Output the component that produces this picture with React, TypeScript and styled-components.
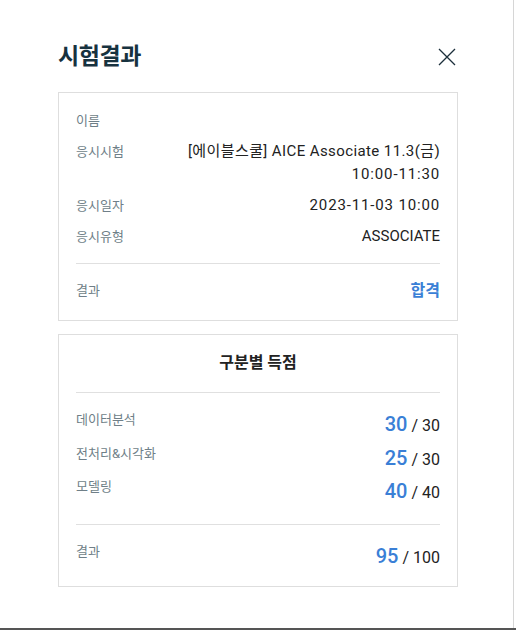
import styled, { createGlobalStyle } from 'styled-components'

const GlobalStyle = createGlobalStyle`
    body {
        margin: 0;
        font-family: Roboto, "Noto Sans CJK KR", sans-serif;
        color: #222;
    }
`

const Screen = styled.div`
    width: 516px;
    height: 630px;
    display: flex;
    flex-direction: column;
    background: #fff;
`
const Modal = styled.div`
    width: 514px;
    height: 628px;
    box-sizing: border-box;
    padding: 42px 55px 0 58px;
    background: #fff;
    border-right: 1px solid #d6d6d6;
`
const Backdrop = styled.div`
    flex: 1;
    background: #555;
`
const Header = styled.div`
    display: flex;
    justify-content: space-between;
    align-items: center;
    height: 30px;
    margin-bottom: 20px;
`
const Title = styled.h2`
    margin: 0;
    font-size: 23px;
    font-weight: 700;
    letter-spacing: -0.4px;
    color: #17323f;
    line-height: 30px;
`
const CloseButton = styled.button`
    width: 18px;
    height: 18px;
    padding: 0;
    margin-right: 2px;
    border: 0;
    background: none;
    cursor: pointer;
    display: flex;
`
const Card = styled.section<{ $gap?: number; $bottom: number }>`
    border: 1px solid #dedede;
    margin-top: ${p => p.$gap || 0}px;
    padding: 16px 17px ${p => p.$bottom}px 17px;
`
const InfoList = styled.div`
    display: flex;
    flex-direction: column;
    gap: 8px;
`
const Row = styled.div`
    display: flex;
    justify-content: space-between;
    align-items: flex-start;
    line-height: 23px;
`
const Label = styled.span`
    font-size: 13px;
    color: #6f7f88;
    white-space: nowrap;
`
const Value = styled.span<{ $accent?: boolean; $spacing?: number }>`
    font-size: ${p => (p.$accent ? 16 : 15)}px;
    text-align: right;
    letter-spacing: ${p => p.$spacing || 0}px;
    color: ${p => (p.$accent ? '#3a7fd6' : '#222')};
    font-weight: ${p => (p.$accent ? 700 : 400)};
`
const Divider = styled.hr<{ $top: number; $bottom: number }>`
    border: 0;
    border-top: 1px solid #e0e0e0;
    margin: ${p => p.$top}px 0 ${p => p.$bottom}px;
`
const CardTitle = styled.h3`
    margin: 0;
    text-align: center;
    font-size: 16px;
    font-weight: 700;
    line-height: 23px;
    color: #222;
`
const ScoreList = styled.div`
    display: flex;
    flex-direction: column;
    gap: 1.5px;
`
const Score = styled.span`
    display: flex;
    align-items: baseline;
    height: 32px;
    line-height: 32px;
    white-space: nowrap;
`
const Got = styled.span`
    font-size: 20px;
    font-weight: 500;
    color: #3a7fd6;
`
const Total = styled.span`
    font-size: 16px;
    color: #222;
    white-space: pre;
`

const CloseIcon = () => (
    <svg width="18" height="18" viewBox="0 0 18 18">
        <path d="M1 1L17 17M17 1L1 17" stroke="#1c2f3b" strokeWidth="1.3" fill="none" />
    </svg>
)

const scores = [
    { name: '데이터분석', got: 30, max: 30 },
    { name: '전처리&시각화', got: 25, max: 30 },
    { name: '모델링', got: 40, max: 40 },
]

const ScoreValue = ({ got, max }: { got: number; max: number }) => (
    <Score>
        <Got>{got}</Got>
        <Total> / {max}</Total>
    </Score>
)

export default function App() {
    return (
        <Screen>
            <GlobalStyle />
            <Modal>
                <Header>
                    <Title>시험결과</Title>
                    <CloseButton aria-label="닫기">
                        <CloseIcon />
                    </CloseButton>
                </Header>

                <Card $bottom={18}>
                    <InfoList>
                        <Row>
                            <Label>이름</Label>
                            <Value></Value>
                        </Row>
                        <Row>
                            <Label>응시시험</Label>
                            <Value $spacing={0.4}>
                                [에이블스쿨] AICE Associate 11.3(금)
                                <br />
                                <Value $spacing={0.85}>10:00-11:30</Value>
                            </Value>
                        </Row>
                        <Row>
                            <Label>응시일자</Label>
                            <Value $spacing={0.85}>2023-11-03 10:00</Value>
                        </Row>
                        <Row>
                            <Label>응시유형</Label>
                            <Value>ASSOCIATE</Value>
                        </Row>
                    </InfoList>
                    <Divider $top={15} $bottom={15} />
                    <Row>
                        <Label>결과</Label>
                        <Value $accent>합격</Value>
                    </Row>
                </Card>

                <Card $gap={13} $bottom={14}>
                    <CardTitle>구분별 득점</CardTitle>
                    <Divider $top={18} $bottom={15} />
                    <ScoreList>
                        {scores.map(s => (
                            <Row key={s.name}>
                                <Label>{s.name}</Label>
                                <ScoreValue got={s.got} max={s.max} />
                            </Row>
                        ))}
                    </ScoreList>
                    <Divider $top={17} $bottom={15} />
                    <Row>
                        <Label>결과</Label>
                        <ScoreValue got={95} max={100} />
                    </Row>
                </Card>
            </Modal>
            <Backdrop />
        </Screen>
    )
}
